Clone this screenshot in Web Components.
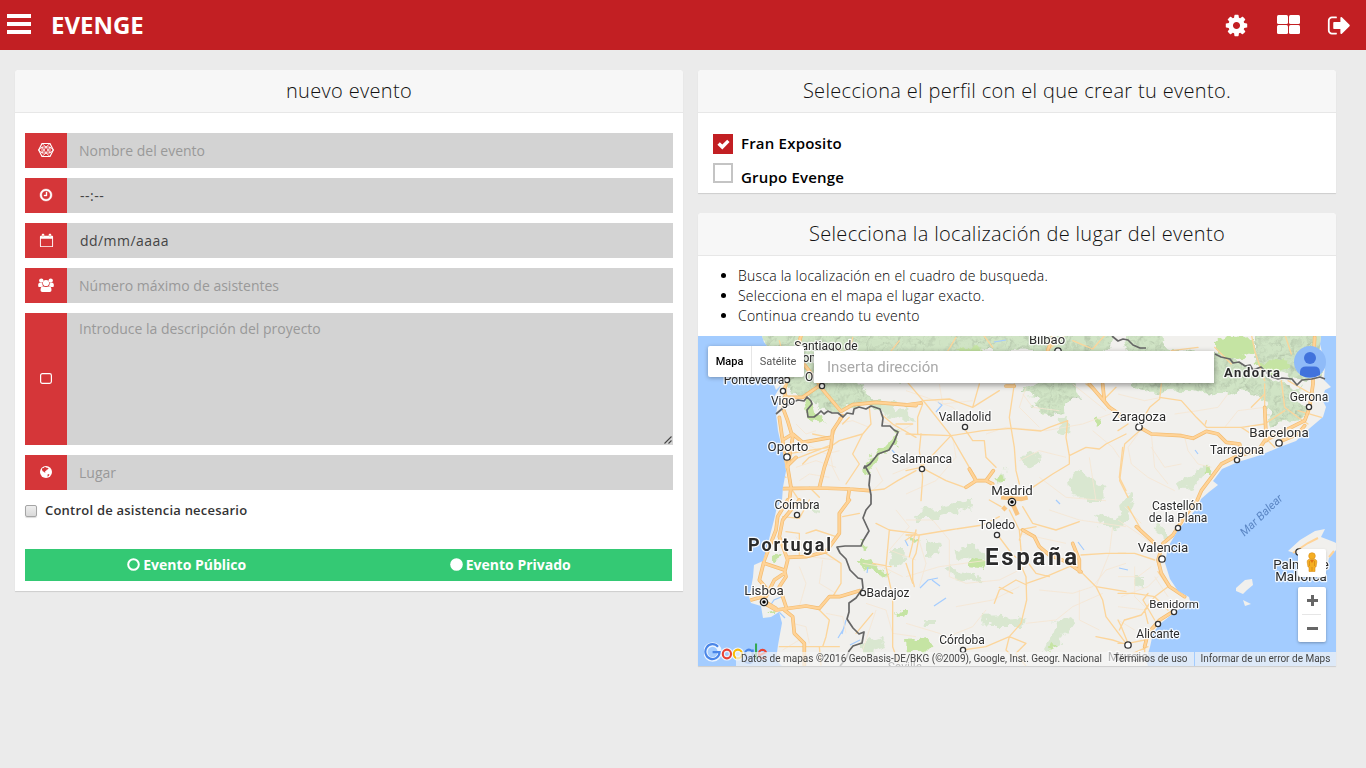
<!DOCTYPE html>
<html lang="es">
<head>
<meta charset="utf-8">
<title>Evenge</title>
<style>
body{margin:0;background:#ebebeb;font-family:"Open Sans",sans-serif;font-size:14px;color:#333;height:768px;overflow:hidden}
</style>
</head>
<body>
<ev-app></ev-app>
<script>
const define=(name,html,setup)=>customElements.define(name,class extends HTMLElement{
  constructor(){super();const r=this.attachShadow({mode:'open'});const t=document.createElement('template');t.innerHTML=html;r.append(t.content.cloneNode(true));}
  connectedCallback(){if(setup)setup(this,this.shadowRoot);}
});

const ICONS={
 cog:['0 0 1792 1792','<path d="M1152 896q0-106-75-181t-181-75-181 75-75 181 75 181 181 75 181-75 75-181zm512-109v222q0 12-8 23t-20 13l-185 28q-19 54-39 91 35 50 107 138 10 12 10 25t-9 23q-27 37-99 108t-94 71q-12 0-26-9l-138-108q-44 23-91 38-16 136-29 186-7 28-36 28h-222q-14 0-24.5-8.5t-11.5-21.5l-28-184q-49-16-90-37l-141 107q-10 9-25 9-14 0-25-11-126-114-165-168-7-10-7-23 0-12 8-23 15-21 51-66.5t54-70.5q-27-50-41-99l-183-27q-13-2-21-12.5t-8-23.5v-222q0-12 8-23t19-13l186-28q14-46 39-92-40-57-107-138-10-12-10-24 0-10 9-23 26-36 98.500-107.500t94.500-71.500q13 0 26 10l138 107q44-23 91-38 16-136 29-186 7-28 36-28h222q14 0 24.500 8.500t11.500 21.500l28 184q49 16 90 37l142-107q9-9 24-9 13 0 25 10 129 119 165 170 7 8 7 22 0 12-8 23-15 21-51 66.500t-54 70.500q26 50 41 98l183 28q13 2 21 12.500t8 23.500z"/>'],
 grid:['0 0 25 25','<rect x="1" y="3" width="11" height="9" rx="1.500"/><rect x="13" y="3" width="11" height="9" rx="1.500"/><rect x="1" y="13" width="11" height="9" rx="1.500"/><rect x="13" y="13" width="11" height="9" rx="1.500"/>'],
 out:['0 0 1792 1792','<path d="M704 1440q0 4 1 20t.5 26.500-3 23.500-10 19.500-20.500 6.500h-320q-119 0-203.500-84.500t-84.500-203.500v-704q0-119 84.500-203.500t203.500-84.500h320q13 0 22.500 9.500t9.500 22.500q0 4 1 20t.5 26.500-3 23.500-10 19.500-20.500 6.500h-320q-66 0-113 47t-47 113v704q0 66 47 113t113 47h312l11.500 1 11.500 3 8 5.500 7 9 2 13.500zm928-544q0 26-19 45l-544 544q-19 19-45 19t-45-19-19-45v-288h-448q-26 0-45-19t-19-45v-384q0-26 19-45t45-19h448v-288q0-26 19-45t45-19 45 19l544 544q19 19 19 45z"/>'],
 hex:['0 0 16 16','<g fill="none" stroke="#fff" stroke-width="1.200"><path d="M4 1.500h8L15.300 8 12 14.500H4L.7 8z"/><g stroke-width=".9" opacity=".9"><path d="M4 1.500 8 5l4-3.500M.5 8 4 5v6zM15.500 8 12 5v6zM4 14.500 8 11l4 3.500M8 5 4 11h8zM8 11 4 5h8z"/></g></g>'],
 clock:['0 0 1792 1792','<path d="M1024 544v448q0 14-9 23t-23 9h-320q-14 0-23-9t-9-23v-64q0-14 9-23t23-9h224v-352q0-14 9-23t23-9h64q14 0 23 9t9 23zm416 352q0-148-73-273t-198-198-273-73-273 73-198 198-73 273 73 273 198 198 273 73 273-73 198-198 73-273zm224 0q0 209-103 385.500t-279.500 279.500-385.500 103-385.500-103-279.500-279.500-103-385.500 103-385.500 279.500-279.500 385.500-103 385.500 103 279.500 279.500 103 385.500z" stroke="#fff" stroke-width="50"/>'],
 calendar:['0 0 16 16','<path fill-rule="evenodd" d="M2 3h1V1.500q0-.8.8-.8h1q.8 0 .8.8V3h4.800V1.500q0-.8.800-.8h1q.8 0 .8.800V3H14q1 0 1 1v10q0 1-1 1H2q-1 0-1-1V4q0-1 1-1zm0 3v8h12V6z"/><path d="M4.300 2v2M11.700 2v2" stroke="#e79a6a" stroke-width=".8"/>'],
 users:['0 0 16 14','<circle cx="3.300" cy="2.600" r="2.200"/><circle cx="12.700" cy="2.600" r="2.200"/><circle cx="8" cy="5" r="3.100"/><path d="M.2 8V6.500Q.4 4.500 2 4.700l2.400.5Q4.200 7 5 7.800 3.800 8 3.200 9H1Q.2 9 .2 8zM15.800 8V6.500Q15.600 4.500 14 4.700l-2.400.5q.2 1.800-.6 2.600 1.200.2 1.800 1.200H15q.8 0 .8-1zM4.500 8.200Q8 9.800 11.500 8.200q2 .6 2 4 0 1.800-1.800 1.800H4.300q-1.800 0-1.800-1.800 0-3.400 2-4z"/>'],
 square:['0 0 12 12','<rect x=".6" y=".6" width="10.800" height="9.800" rx="1.800" fill="none" stroke="#fff" stroke-width="1.200"/>'],
 globe:['0 0 12 12','<circle cx="6" cy="6" r="6"/><path fill="#d53639" d="M2 2.500 4 1.700 4.600 1l1.800.3.200.8 1.200-.4.8.9-1 1-.9.100-.500 1-.9.300-.2 1 .4.800-.9-.2-.8-.9-1.100-.5L2 3.800zM7.500 8.500 9.300 8l-.2 1.600-1.500 1.100z"/>'],
 ring:['0 0 13 13','<circle cx="6.500" cy="6.500" r="5.300" fill="none" stroke="#fff" stroke-width="2"/>'],
 disc:['0 0 13 13','<circle cx="6.500" cy="6.500" r="6.300"/>'],
 check:['0 0 12 12','<path d="M.4 6.200 2.600 3.900 4.900 6.100 9.400 1.600 11.600 3.800 4.900 10.500z"/>']
};
define('ev-icon','<style>:host{display:block;flex:none}svg{display:block;width:100%;height:100%;fill:#fff}</style><svg></svg>',(el,r)=>{
  const [vb,body]=ICONS[el.getAttribute('name')];const s=r.querySelector('svg');s.setAttribute('viewBox',vb);s.innerHTML=body;
  el.style.width=el.getAttribute('w')+'px';el.style.height=(el.getAttribute('h')||el.getAttribute('w'))+'px';
});

define('ev-topbar',`<style>
:host{display:flex;height:50px;background:#c21f23;color:#fff;align-items:center;box-sizing:border-box;padding:0 14px 0 7px}
.menu{width:24px;height:20px;display:flex;flex-direction:column;justify-content:space-between;margin-bottom:2px}
.menu i{height:4px;background:#fff}
b{font-size:24px;line-height:50px;font-weight:700;margin-left:20px;letter-spacing:0;flex:1}
nav{display:flex;gap:26.500px;align-items:center}
</style><div class="menu"><i></i><i></i><i></i></div><b>EVENGE</b><nav><ev-icon name="cog" w="25"></ev-icon><ev-icon name="grid" w="25" style="position:relative;top:-.5px"></ev-icon><ev-icon name="out" w="25"></ev-icon></nav>`);

define('ev-card',`<style>
:host{display:block;background:#fff;border-radius:4px 4px 0 0;box-shadow:0 1px 1px rgba(0,0,0,.13)}
h2{margin:0;height:42px;line-height:42px;border-bottom:1px solid #e7e7e7;background:#f7f7f7;border-radius:4px 4px 0 0;text-align:center;font-size:20px;font-weight:300;color:#111;letter-spacing:.33px}
</style><h2></h2><slot></slot>`,(el,r)=>r.querySelector('h2').textContent=el.getAttribute('heading'));

define('ev-field',`<style>
:host{display:flex;height:35px;background:#d3d3d3;color:#999}
:host([tall]){height:132px}
.tag{width:42px;background:#d53639;display:flex;align-items:center;justify-content:center;box-sizing:border-box;padding-bottom:1px}
.text{flex:1;padding:8px 12px;line-height:20px;box-sizing:border-box;position:relative;letter-spacing:var(--field-spacing,0)}
:host([tall]) .text{padding-top:6px}
:host([dark]) .text{color:#444;padding-left:13px}
svg{display:none;position:absolute;right:0;bottom:0}
:host([tall]) svg{display:block}
</style><div class="tag"></div><div class="text"><slot></slot><svg width="10" height="10"><path d="M1.500 8.500 8.500 1.500M5.500 8.500 8.500 5.500" stroke="#444" stroke-width="1.100" fill="none"/></svg></div>`,(el,r)=>{
  const w=el.getAttribute('w'),h=el.getAttribute('h')||w;r.querySelector('.tag').innerHTML=`<ev-icon name="${el.getAttribute('icon')}" w="${w}" h="${h}"></ev-icon>`;});

define('ev-form',`<style>
:host{display:flex;flex-direction:column;padding:20px 10px 10px}
.fields{display:flex;flex-direction:column;gap:10px}
.control{display:flex;align-items:center;gap:8px;height:20px;margin-top:11px;font-size:13px;font-weight:600;color:#333;letter-spacing:.22px}
.control span{padding-bottom:2px}
.control i{width:10px;height:10px;border:1px solid #a5a5a5;border-radius:2px;background:linear-gradient(#eee,#d9d9d9);box-shadow:0 1px 1px rgba(0,0,0,.15)}
.kind{display:flex;height:32px;background:#34c974;margin:28px 1px 0 0;color:#fff;font-weight:700}
.kind span{flex:1;display:flex;align-items:center;justify-content:center;gap:3px;height:31px}
</style>
<div class="fields">
<ev-field icon="hex" w="16">Nombre del evento</ev-field>
<ev-field icon="clock" w="14" dark style="--field-spacing:.5px">--:--</ev-field>
<ev-field icon="calendar" w="15" dark style="--field-spacing:.45px">dd/mm/aaaa</ev-field>
<ev-field icon="users" w="16" h="14">Número máximo de asistentes</ev-field>
<ev-field icon="square" w="12" tall>Introduce la descripción del proyecto</ev-field>
<ev-field icon="globe" w="12">Lugar</ev-field>
</div>
<div class="control"><i></i><span>Control de asistencia necesario</span></div>
<div class="kind"><span><ev-icon name="ring" w="13"></ev-icon>Evento Público</span><span><ev-icon name="disc" w="13"></ev-icon>Evento Privado</span></div>`);

define('ev-profile',`<style>
:host{display:flex;gap:8px;height:30px;color:#000;font-size:15px;font-weight:600;line-height:20px;letter-spacing:.2px}
.box{width:20px;height:20px;box-sizing:border-box;border:2px solid #c4c4c4;display:flex;align-items:center;justify-content:center}
ev-icon{display:none}
:host([checked]) .box{background:#c21f23;border-color:#c21f23}
:host([checked]) ev-icon{display:block}
.label{height:20px;margin-top:var(--drop,-1px)}
</style><div class="box"><ev-icon name="check" w="13"></ev-icon></div><div class="label"><slot></slot></div>`);

define('ev-steps',`<style>:host{display:block;height:80px;box-sizing:border-box;padding-top:10px;color:#000;font-weight:300;letter-spacing:.23px}
ul{margin:0;padding-left:40px;line-height:20px}</style><ul><li>Busca la localización en el cuadro de busqueda.</li><li>Selecciona en el mapa el lugar exacto.</li><li>Continua creando tu evento</li></ul>`);

/* Cities: name, label centre x, baseline, font size, marker x, marker y */
const CITIES=[
['Santiago de',826,350,12],['Compostela',827,362,12],['Pontevedra',754,384,12,787,380],['Orense',824,381,12,822,386],['Vigo',783,405,12,783,391],
['Bilbao',1047,344,13,1058,351],['Valladolid',965,421,12,965,427],['Zaragoza',1139,421,13,1139,427],['Gerona',1309,401,12,1309,407],
['Barcelona',1279,437,13.300,1279,443],['Tarragona',1237,454,12,1237,460],['Oporto',788,451,13.300,787,457],['Salamanca',922,463,12.200,922,469],
['Coímbra',797,509,12,797,515],['Madrid',1012,495,13.300],['Toledo',997,529,12,997,535],['Castellón',1177,510,12],['de la Plana',1178,522,12,1178,528],
['Valencia',1163,552,13.300,1162,559],['Badajoz',888,597,12,863,593],['Lisboa',764,595,13.300],['Benidorm',1174,608,11.500,1174,612],['Alicante',1158,638,12,1158,624],
['Córdoba',962,644,12,963,650],['Palma de',1301,569,13.300,1299,552],['Mallorca',1301,581,13.300],['Murcia',1128,661,13.300,1128,645],['Sevilla',905,671,12]];
const labels=CITIES.map(c=>(c[4]?`<circle cx="${c[4]}" cy="${c[5]}" r="${c[3]>12.500?3.200:2.600}" fill="#fff" stroke="#333" stroke-width="1.300"/>`:'')+`<text x="${c[1]}" y="${c[2]}" font-size="${c[3]}">${c[0]}</text>`).join('');

define('ev-map-canvas',`<style>
:host{display:block;width:638px;height:330px}svg{display:block}
.r path,.m path{fill:none;stroke-linejoin:round;stroke-linecap:round}
.m path{stroke:#fcd59b;stroke-width:4}
.t path{fill:none;stroke:#f5e6d3;stroke-width:2.500}
.edge path{stroke:#f2bb70;stroke-width:11}.core path{stroke:#ffd397;stroke-width:7}
.b path{fill:none;stroke:#666;stroke-width:1.700;stroke-linejoin:round}
text{font-family:Roboto,sans-serif;fill:#2b2b2b;text-anchor:middle;paint-order:stroke;stroke:#fff;stroke-opacity:.85;stroke-width:2.500px;stroke-linejoin:round}
</style>
<svg width="638" height="330" viewBox="698 336 638 330">
<defs>
<filter id="rough" x="-5%" y="-5%" width="110%" height="110%"><feTurbulence type="fractalNoise" baseFrequency=".09" numOctaves="3" seed="4" result="n"/><feDisplacementMap in="SourceGraphic" in2="n" scale="15" xChannelSelector="R" yChannelSelector="G"/></filter>
<filter id="relief" x="0" y="0" width="100%" height="100%" color-interpolation-filters="sRGB"><feTurbulence type="fractalNoise" baseFrequency=".1" numOctaves="3" seed="9" result="n"/><feDiffuseLighting in="n" surfaceScale="1.300" lighting-color="#fff" diffuseConstant="1.030" result="l"><feDistantLight azimuth="225" elevation="74"/></feDiffuseLighting><feComposite in="l" in2="SourceAlpha" operator="in" result="c"/><feBlend in="SourceGraphic" in2="c" mode="multiply"/></filter>
<clipPath id="landclip"><path d="M762 336 764 342 772 352 776 364 783 376 774 385 776 390 782 384 774 397 778 403 776 414 778 431 781 444 784 457 786 471 783 487 782 500 777 507 774 520 768 543 763 561 754 565 753 577 751 588 749 597 751 603 761 606 763 618 771 617 779 612 782 623 778 645 776 660 782 666H1148L1146 660 1150 647 1153 633 1160 624 1170 616 1190 601 1189 597 1178 591 1170 579 1165 563 1168 547 1178 530 1198 507 1201 499 1209 492 1218 485 1213 481 1222 469 1238 462 1261 455 1280 447 1296 441 1310 428 1323 417 1326 407 1322 399 1325 390 1331 387 1328 384 1324 380 1325 364 1320 344 1321 336Z"/></clipPath></defs>
<rect x="698" y="336" width="638" height="330" fill="#a3ccff"/>
<path fill="#f1f0ed" d="M762 336 764 342 772 352 776 364 783 376 774 385 776 390 782 384 774 397 778 403 776 414 778 431 781 444 784 457 786 471 783 487 782 500 777 507 774 520 768 543 763 561 754 565 753 577 751 588 749 597 751 603 761 606 763 618 771 617 779 612 782 623 778 645 776 660 782 666H1148L1146 660 1150 647 1153 633 1160 624 1170 616 1190 601 1189 597 1178 591 1170 579 1165 563 1168 547 1178 530 1198 507 1201 499 1209 492 1218 485 1213 481 1222 469 1238 462 1261 455 1280 447 1296 441 1310 428 1323 417 1326 407 1322 399 1325 390 1331 387 1328 384 1324 380 1325 364 1320 344 1321 336ZM1236 588 1245 580 1252 579 1253 585 1247 590 1243 594 1236 591ZM1243 600 1251 604 1245 606ZM1288 551 1300 540 1315 531 1325 529 1321 537 1334 542 1336 543V550L1329 558 1326 572 1316 570 1308 560 1298 554Z"/>
<g clip-path="url(#landclip)">
<g filter="url(#rough)" fill="#d0e4c5">
<g filter="url(#relief)"><path d="M755 330H1115L1108 352 1060 354 1030 352 1000 350 930 356 905 380 860 372 838 392 836 404 820 406 808 396 792 396 786 378 765 350ZM820 378 860 384 882 404 880 410 848 404 838 414 822 408ZM1024 388 1045 378 1072 382 1078 396 1068 406 1050 416 1034 408 1038 398 1020 394ZM1122 330H1158L1165 345 1215 352 1240 364 1256 372 1280 382 1300 388 1298 400 1308 410 1296 420 1270 426 1264 400 1242 390 1216 396 1190 390 1150 392 1128 386 1128 360ZM1254 330H1322V375L1300 380 1270 372 1254 360Z"/></g>
<path d="M870 402H893L912 418 908 422 880 412ZM1060 418 1070 414 1068 435 1059 432ZM1023 456 1040 452 1041 466 1028 468ZM992 480 1006 470 1008 480 996 488ZM1069 478 1080 470 1092 480 1102 486 1103 503H1085L1078 496 1070 492ZM1178 484 1198 470 1205 464 1208 470 1195 486 1180 492ZM915 513 940 508 972 500 974 506 958 512 935 519 918 519ZM950 551 970 545 984 552 985 562 970 563ZM925 539 938 542 940 554 925 556ZM945 568 970 572 982 580 975 582 950 576ZM982 618 1016 616 1028 621 1022 626 990 626ZM1056 620 1070 614 1072 624 1062 640 1056 650 1045 650ZM1110 524 1124 506 1128 490 1134 500 1128 520 1115 531ZM1154 520 1166 530 1166 538 1156 530ZM1136 578 1144 576 1144 588 1137 586ZM890 550 904 550 903 564 892 566ZM862 642 880 636 885 648 862 654ZM925 620 938 618 936 628 926 628ZM1096 512 1120 520 1116 527 1100 524ZM815 500 818 500 820 514 812 512Z" opacity=".75"/>
<path fill="#c5e4a3" d="M802 402 810 398 814 412 826 420 816 424 806 418ZM900 428 896 446 872 464 864 474 862 468 872 454 886 444ZM955 348 978 346 986 354 966 360ZM1215 340 1252 338 1254 352 1232 360 1215 352ZM1270 360 1292 362 1290 370 1262 374 1256 364ZM992 480 1004 474 1006 482 996 485ZM1098 416 1102 422 1098 426 1095 420ZM1208 464 1210 474 1203 474ZM855 560 862 560 888 571 887 578 864 568ZM970 560 984 564 986 570 970 568ZM907 640 928 638 934 650 908 652ZM906 534 921 541 914 544ZM902 610 908 610 906 618 898 614ZM772 556 784 552 780 560 772 562ZM860 540 866 542 862 548ZM768 614 776 610 778 614ZM1058 647 1050 652 1052 644Z"/>
</g>
<g fill="none" stroke="#a3ccff" stroke-width="1.200"><path d="M892 450 897 456 904 462M938 402 942 405 936 412M905 540 908 546M932 580 940 586M946 598 934 606M920 588 928 580 938 578M838 638 844 628 846 620 842 634M1078 542 1084 550M1056 500 1060 504M868 567 867 573M1119 568 1128 570M1195 450 1198 454M904 376 908 382M994 342 1006 340M850 645 860 640M843 510 848 500M781 597 774 600 770 606M779 612 785 618"/></g>
<g class="t"><g transform="translate(696 334) scale(.33333)"><path d="M270 340 330 330 390 360 430 350M300 400 360 380 420 400M310 440 340 420 400 430M300 270 330 300 360 290M420 270 470 260 520 280M600 300 650 270M590 420 640 400M530 470 560 440 540 400M400 340 410 400 430 440M300 310 340 340M555 260 630 290"/></g>
<g transform="translate(906 334) scale(.33333)"><path d="M0 170 60 190 140 220 170 250M140 310 150 370 90 440 0 480M100 150 110 210 200 200M240 300 300 280 420 290 530 270 640 230M350 180 380 220 460 230M340 380 400 350 480 370M400 430 480 490 600 500M500 150 600 230M360 160 340 220 400 280M560 290 620 340 640 370M550 370 570 500"/></g>
<g transform="translate(1118 334) scale(.33333)"><path d="M0 180 80 200 130 190M60 300 30 340 40 390 90 430 170 470M100 300 110 400 150 450M200 310 210 350 240 390 280 400M170 240 240 230 300 220 330 180M320 280 360 230 440 220M190 390 140 400 100 340"/></g>
<g transform="translate(696 500) scale(.33333)"><path d="M300 110 340 170 420 180M310 200 330 250 310 320M380 180 370 250 420 280M290 370 330 380 340 430M390 340 440 350 450 400M260 450 310 420M600 30 640 80 580 150 660 180M500 190 560 200 620 230M510 310 570 330 590 400 660 410M540 330 500 450"/></g>
<g transform="translate(906 500) scale(.33333)"><path d="M0 60 80 60 130 120 130 230 180 250 280 240 360 200M340 100 480 130M0 230 100 200 250 180M400 270 500 280 560 260 600 210 660 190M150 320 260 300 340 260M100 420 200 380 240 330M360 370 450 360 500 320 590 280M520 270 520 360 580 390M30 90 60 190 40 260M0 370 100 400 170 440M430 30 520 60 660 80M620 80 610 160 570 260"/></g>
<g transform="translate(1118 500) scale(.33333)"><path d="M0 60 60 100 100 130M0 230 60 230 100 200M20 20 70 70M50 200 50 290 80 320M10 290 90 260 120 230M110 230 150 290M0 320 80 330M0 360 50 390"/></g></g>
<g class="m"><g transform="translate(696 334) scale(.33333)"><path d="M555 240 590 270 660 310M520 220 525 270 500 300 430 320 400 340 270 360M500 300 470 360 490 390 450 450M430 250 410 310M520 470 565 465 605 440 660 410M440 270 460 250M280 380 310 370 400 335M320 390 340 370 400 345M290 470 310 500M250 420 270 430M350 300 400 310M650 270 600 270M610 20 570 70M470 10 450 100M250 20 270 100M340 460 370 490"/></g>
<g transform="translate(906 334) scale(.33333)"><path d="M0 210 40 207 50 200M50 200 130 195 200 220 280 170M0 140 60 210 135 305 230 290 315 283 405 291 430 280 485 260M50 210 35 250 35 300M0 300 135 305 190 400 210 430M135 305 45 400 0 410M45 400 120 440 175 460M175 283 200 320 235 320 240 370 270 400M200 220 220 150M325 150 310 250 325 340 330 410 340 450M45 300 40 350 50 430 45 500M540 150 590 190 640 250M485 260 480 310 490 365M380 460 440 420 490 390 490 365 540 340 580 345 600 330 660 300M650 340 640 430 660 470M230 0 260 40M430 45 480 0M500 20 560 45 600 0M630 160 590 200M150 10 120 60"/></g>
<g transform="translate(1118 334) scale(.33333)"><path d="M130 150 125 195 95 220 65 270M65 290 20 330 10 400 5 440 30 490M125 190 190 200 235 250 265 280 370 280 440 270 500 230M370 280 400 300 440 310 470 340M440 150 440 300M490 140 500 220 540 250 570 270M265 260 262 270M160 50 240 40M400 0 410 50 440 140M440 180 400 220M100 60 130 140M0 290 30 270M510 140 580 180M540 230 610 250M290 40 340 90M500 0 520 60"/></g>
<g transform="translate(696 500) scale(.33333)"><path d="M390 160 435 190 435 250 410 290M370 330 400 360 390 410 380 440 300 440 250 440M430 440 370 440 375 495M540 70 580 90 660 100M580 90 570 200 590 290 590 440 610 498M640 170 660 90M650 250 630 190M585 200 530 190M270 95 310 100 310 170M260 50 310 55 340 0M330 100 360 90 420 110M440 50 490 40M480 400 530 340"/></g>
<g transform="translate(906 500) scale(.33333)"><path d="M310 30 340 90 345 150 340 185 360 230 362 300 345 370 310 410 240 440 170 450M0 105 40 105 130 90 230 75 280 50M40 105 30 160 20 180 20 240 25 260M0 120 30 100M350 20 380 70 450 90 520 65M275 105 320 165 350 185M362 250 420 230 490 200M265 310 280 270 330 240 362 255M340 90 390 80M280 262 320 280M525 165 600 160 660 160M525 215 570 260 590 300 600 350 660 430M570 260 660 275M310 410 360 430 330 460 360 498M310 410 300 450 320 470M570 410 620 420 650 430M340 120 350 90M640 390 655 360M250 0 285 20M360 180 390 220 430 230"/></g>
<g transform="translate(1118 500) scale(.33333)"><path d="M0 160 50 160 110 180M30 20 70 90 130 150M0 280 50 280 110 290 150 330M120 215 150 260 110 290 80 330 90 370M0 430 30 430 10 380 0 360M30 430 80 420 80 470M90 280 75 300 110 360M20 360 70 345 90 320M0 480 90 440"/></g></g>
<g class="r edge"></g><g class="r core"></g>
<g transform="translate(906 500) scale(.33333)" fill="none" stroke="#f9c582" stroke-width="13"><path d="M285 -8 345 -3 365 -8M315 0 335 45M290 20 300 30"/></g>
</g>
<path d="M1293 553 1308 543 1318 538M1329 557 1334 551" fill="none" stroke="#ffd397" stroke-width="2"/>
<g class="b"><path d="M776 414 783 408 791 403 798 400 804 401 807 397 811 401 812 404 807 410 808 417 814 417 818 414 821 411 824 414 828 411 832 413 838 413 843 417 847 413 853 414 854 409 859 407 866 409 871 406 874 407 880 409 883 418 882 426 890 426 894 430 898 432 894 442 889 450 878 454 870 464 864 468 865 466 870 475 869 485 871 495 871 504 866 510 863 518 869 531 863 541 861 546 845 546 837 547 840 553 846 559 850 570 858 578 862 579 863 588 856 598 849 603 849 612 847 619 853 628 859 634 864 632 862 643 853 646 849 651 846 659 840 666"/><path d="M1112 336 1118 341 1123 339 1128 340 1133 345 1140 348 1146 348M1215 354 1221 357 1230 359 1233 363 1239 362 1245 366 1250 365 1253 370 1261 367 1267 373 1272 377 1278 379 1282 378 1292 379 1297 385 1302 380 1312 379 1320 377 1325 379"/></g>
<g fill="#fff" stroke="#222" stroke-width="1.400"><circle cx="1012" cy="502" r="3.600"/><circle cx="764" cy="602" r="3.600"/></g><circle cx="1012" cy="502" r="1.800"/><circle cx="764" cy="602" r="1.800"/>
${labels}
<g font-weight="700"><text x="789.500" y="551" font-size="18" textLength="83">Portugal</text><text x="1031" y="564.500" font-size="24" textLength="92">España</text><text x="1252" y="377" font-size="13" textLength="56">Andorra</text></g>
<text transform="translate(1264 518) rotate(-44)" font-size="11.500" font-style="italic" style="fill:#5b86c4;stroke:none">Mar Balear</text>
</svg>`,(el,r)=>{
 const sheets=[
 [696,334,'M275 130 265 170 270 190 260 220 275 260 290 310 280 370 275 400 285 460 280 500M265 190 320 190 370 155 435 232 470 212 540 205 660 215M250 250 260 320 270 400M440 245 410 290 405 340 385 400 370 460M260 464 370 462 460 465 520 470M460 465 455 500M265 315 290 300 320 325 405 310M315 5 300 60 370 150M280 390 300 370'],
 [906,334,'M0 213 45 207M300 156 325 156M550 150 610 220 640 240M590 150 595 200M190 405 210 440 240 440 262 410M210 440 180 460M240 440 260 450M425 50 440 10'],
 [1118,334,'M65 280 100 300 190 305 225 313 265 292 300 300 325 325 365 330 370 360M590 10 585 100 585 150 575 220 560 260 500 290 440 320 420 350 360 365 310 390 280 430 250 470 238 498M440 220 445 320M560 275 540 300 480 325'],
 [696,500,'M275 0 245 50 240 90 205 180 190 240 215 270M310 0 260 60 250 110 275 180 265 220 235 240 210 290M275 172 330 170 390 155 430 100 430 40 460 0M205 190 265 210 270 230 250 260 270 320M205 310 240 330 330 318 370 325 400 290 430 290 490 272M265 330 290 350 295 400 325 430 325 498M165 300 200 290M215 310 240 325'],
 [906,500,'M350 90 385 110 400 140 430 165 480 185 525 215M500 130 520 180 520 215'],
 [1118,500,'M230 10 200 50 165 105 135 130 120 180 130 220 155 260 200 290M165 335 125 360 90 400M90 400 80 440M55 80 110 130']];
 const html=sheets.map(([x,y,d])=>`<g transform="translate(${x} ${y}) scale(.33333)"><path d="${d}"/></g>`).join('');
 r.querySelector('.edge').innerHTML=html;r.querySelector('.core').innerHTML=html;
});

define('ev-map',`<style>
:host{display:block;position:relative;height:330px;overflow:hidden;font-family:Roboto,sans-serif}
.over{position:absolute}
.types{left:10px;top:10px;width:96px;height:31px;display:flex;background:#fff;border-radius:2px;box-shadow:0 1px 4px rgba(0,0,0,.3);font-size:11px;line-height:31px;color:#565656;text-align:center}
.types b{font-weight:500;color:#000;width:43px;border-right:1px solid #e6e6e6}.types span{flex:1}
.search{left:116px;top:15px;width:387px;height:32px;line-height:32px;padding-left:13px;background:#fff;box-shadow:0 2px 6px rgba(0,0,0,.4);color:#a9a9a9;font-size:15px;font-weight:400}
.user{left:596px;top:10px}
.peg{left:600px;top:213px;width:28px;height:28px;background:#fff;border-radius:2px;box-shadow:0 1px 3px rgba(0,0,0,.15)}
.zoom{left:600px;top:251px;width:28px;height:55px;background:#fff;border-radius:2px;box-shadow:0 1px 3px rgba(0,0,0,.3)}
.legal{right:0;bottom:0;height:14px;display:flex;font-size:10px;line-height:14px;color:#444;background:rgba(245,245,245,.7);white-space:nowrap}
.legal span{box-sizing:border-box;text-align:center}
.logo{left:6px;top:304px}
</style>
<ev-map-canvas></ev-map-canvas>
<svg class="over logo" width="63" height="26" viewBox="0 0 66 26" preserveAspectRatio="none"><g fill="none" stroke="#fff" stroke-opacity=".8" stroke-width="4.500"><circle cx="9" cy="12" r="7.500"/><circle cx="24" cy="14" r="4.300"/><circle cx="35.500" cy="14" r="4.300"/></g><g fill="none" stroke-width="2.200"><path d="M14.700 6.800A7.500 7.500 0 1 0 16.400 12.200H9" stroke="#4a86e8"/><circle cx="24" cy="14" r="4.300" stroke="#e94335"/><circle cx="35.500" cy="14" r="4.300" stroke="#fabb05"/><path d="M51 9.500V19.500Q50.500 23 46.500 23 44 23 42.800 20.800M51 14A4 4.300 0 1 1 43 14 4 4.300 0 1 1 51 14" stroke="#4a86e8"/><path d="M54.500 3.500V19" stroke="#34a853"/><path d="M57.500 15.500 65 12.200Q63.800 9.700 61.300 9.700 57.400 10.200 57.300 14.200 57.800 18.200 61.500 18.400 64 18.200 65 16.500" stroke="#e94335" stroke-width="2"/></g></svg>
<div class="over types"><b>Mapa</b><span>Satélite</span></div>
<div class="over search">Inserta dirección</div>
<svg class="over user" width="32" height="32"><circle cx="16" cy="16" r="16" fill="#8fbbf8"/><circle cx="16" cy="12" r="6" fill="#4072dc"/><path d="M6 29V25.500Q6.500 20.500 12 20.500H20.500Q25.500 20.500 26 25.500V29Q16 34 6 29Z" fill="#4072dc"/></svg>
<div class="over peg"><svg width="28" height="28"><g fill="#f5ae22" stroke="#d98d16" stroke-width=".6"><circle cx="14" cy="7" r="3.300"/><path d="M10.500 10.500H17.500Q19 11 18.800 13L18 18H17V22.500H11V18H10L9.200 13Q9 11 10.500 10.500Z"/></g><path d="M12 11 14 14 16 11Z" fill="#e07416"/><path d="M14 18V22M11.500 12V17M16.500 12V17" stroke="#cf8414" stroke-width=".7"/></svg></div>
<div class="over zoom"><svg width="28" height="55"><path d="M9 13.500H20M14.500 8V19M9 41.500H20" stroke="#666" stroke-width="3" fill="none"/><path d="M4 27.500H23" stroke="#e6e6e6"/></svg></div>
<div class="over legal"><span style="width:371px">Datos de mapas ©2016 GeoBasis-DE/BKG (©2009), Google, Inst. Geogr. Nacional</span><span style="width:87px">Términos de uso</span><span style="width:142px;border-left:1px solid #a3ccff">Informar de un error de Maps</span></div>`);

define('ev-app',`<style>
:host{display:block}
main{display:grid;grid-template-columns:668px 638px;gap:15px;padding:20px 15px;align-items:start}
.side{display:flex;flex-direction:column;gap:20px}
.profiles{height:80px;box-sizing:border-box;padding:21px 15px 0}
</style>
<ev-topbar></ev-topbar>
<main><ev-card heading="nuevo evento"><ev-form></ev-form></ev-card>
<div class="side"><ev-card heading="Selecciona el perfil con el que crear tu evento."><div class="profiles"><ev-profile checked style="height:29px">Fran Exposito</ev-profile><ev-profile style="--drop:4px">Grupo Evenge</ev-profile></div></ev-card>
<ev-card heading="Selecciona la localización de lugar del evento"><ev-steps></ev-steps><ev-map></ev-map></ev-card></div></main>`);
</script>
</body>
</html>
